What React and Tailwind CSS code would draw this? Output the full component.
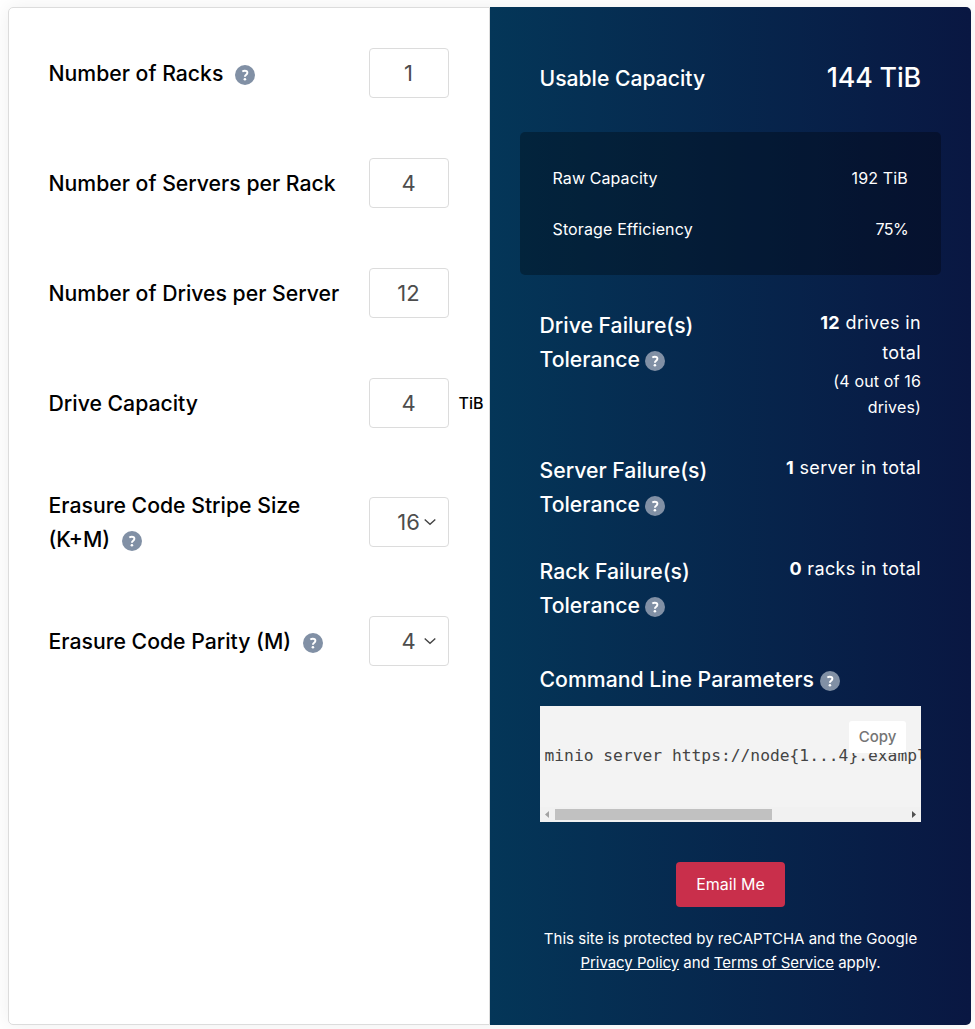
function Help({ className = "" }) {
  return (
    <svg viewBox="0 0 20 20" className={`inline-block size-5 align-[-4px] ${className}`}>
      <circle cx="10" cy="10" r="10" fill="#8190a5" />
      <path d="M7.3 6.500C8 6 8.800 5.700 9.800 5.700c1.700 0 2.600.8 2.600 2.100 0 1.900-2.500 2-2.500 3.900" fill="none" stroke="#fff" strokeWidth="1.9" />
      <circle cx="9.900" cy="14.200" r="1.3" fill="#fff" />
    </svg>
  );
}

function Field({ label, value, help, unit, select }) {
  return (
    <div className="flex items-center justify-between">
      <div className="-ml-[0.5px] w-[300px] text-[21.22px] leading-[34px] font-medium text-black">
        {label}
        {help && <Help className="ml-[11.5px]" />}
      </div>
      <div className="relative flex h-[50px] w-20 items-center justify-center rounded border border-[#dcdcdc] pr-px text-[22px] text-[#4d4d4d]">
        {value}
        {select && (
          <svg viewBox="0 0 12 8" className="absolute top-[20px] right-[12.5px] h-2 w-3">
            <path d="M.7 1.500 6 6.200l5.300-4.700" fill="none" stroke="#444" strokeWidth="1.400" />
          </svg>
        )}
        {unit && <span className="absolute left-[88.5px] text-base font-medium text-black">{unit}</span>}
      </div>
    </div>
  );
}

function Tolerance({ label, count, text, children }) {
  return (
    <div className="flex items-start justify-between">
      <div className="-ml-[0.5px] w-[190px] text-[21.22px] leading-[34px] font-medium">
        <div>{label}</div>
        <div className="flex items-center">Tolerance<Help className="mt-[3px] ml-[5.5px]" /></div>
      </div>
      <div className="w-[142px] text-right text-lg leading-[30px] tracking-[0.36px]">
        <b className="font-bold">{count}</b> {text}
        {children}
      </div>
    </div>
  );
}

export default function App() {
  return (
    <div className="h-[1029px] w-[975px] overflow-hidden bg-white pt-[7px] pl-2 font-[Inter,sans-serif]">
      <div className="flex h-[1018px] w-[963px] rounded-[5px] shadow-[0_0_20px_rgba(0,0,0,0.07)]">
        <div className="flex w-[482px] flex-col gap-[60px] rounded-l-[5px] border border-[#dcdcdc] bg-white py-10 pr-10 pl-10">
          <Field label="Number of Racks" value="1" help />
          <Field label="Number of Servers per Rack" value="4" />
          <Field label="Number of Drives per Server" value="12" />
          <Field label="Drive Capacity" value="4" unit="TiB" />
          <Field label="Erasure Code Stripe Size (K+M)" value="16" help select />
          <Field label="Erasure Code Parity (M)" value="4" help select />
        </div>
        <div className="w-[481px] rounded-r-[5px] bg-linear-to-r/srgb from-[#043658] to-[#091742] px-[50px] pt-[50px] text-white">
          <div className="flex h-[41px] items-center justify-between font-medium">
            <span className="-ml-[0.5px] pt-[2px] text-[21.15px]">Usable Capacity</span>
            <span className="text-[26.800px] tracking-[-0.15px]">144 TiB</span>
          </div>
          <div className="-mx-5 mt-[34px] flex h-[143px] flex-col gap-[25px] rounded-[5px] bg-black/30 px-[33px] pt-[33px] text-base leading-[26px]">
            <div className="flex justify-between"><span className="-ml-[0.5px] tracking-[0.1px]">Raw Capacity</span><span className="tracking-[0.15px]">192 TiB</span></div>
            <div className="flex justify-between"><span className="-ml-[0.5px] tracking-[0.13px]">Storage Efficiency</span><span className="tracking-[-0.6px]">75%</span></div>
          </div>
          <div className="mt-[33px] flex flex-col gap-[33px]">
            <Tolerance label="Drive Failure(s)" count="12" text="drives in total">
              <div className="ml-auto w-[100px] text-base leading-[26px] tracking-[0.15px]">(4 out of 16 drives)</div>
            </Tolerance>
            <Tolerance label="Server Failure(s)" count="1" text="server in total" />
            <Tolerance label="Rack Failure(s)" count="0" text="racks in total" />
          </div>
          <div className="mt-10 -ml-[0.5px] text-[21.25px] leading-[34px] font-medium">
            Command Line Parameters<Help className="ml-[6px]" />
          </div>
          <div className="relative mt-[10px] flex h-[116px] flex-col overflow-hidden bg-[#f3f3f3]">
            <pre className="flex-1 overflow-hidden pt-[38px] pl-[4.5px] font-['DejaVu_Sans_Mono',monospace] text-[16.300px] leading-6 text-[#444]">minio server https://node{"{1...4}"}.example.net</pre>
            <div className="flex h-[15px] items-center bg-[#f1f1f1]">
              <svg viewBox="0 0 15 15" className="size-[15px]"><path d="M9 4v7L5 7.500z" fill="#a3a3a3" /></svg>
              <div className="h-[11px] w-[217px] bg-[#c1c1c1]" />
              <svg viewBox="0 0 15 15" className="ml-auto size-[15px]"><path d="M6 4v7l4-3.500z" fill="#505050" /></svg>
            </div>
            <button className="absolute top-[15px] right-[15px] h-8 w-[57px] rounded-[3px] bg-white text-[15px] font-medium text-[#757575]">Copy</button>
          </div>
          <button className="mx-auto mt-10 block h-[45px] w-[109px] rounded bg-[#c92f4b] pb-[2px] text-base">Email Me</button>
          <p className="-mx-2 mt-5 text-center text-[15px] leading-6">
            <span className="tracking-[0.02px]">This site is protected by reCAPTCHA and the Google</span><br />
            <span className="tracking-[-0.04px]"><a className="underline">Privacy Policy</a> and <a className="underline">Terms of Service</a> apply.</span>
          </p>
        </div>
      </div>
    </div>
  );
}
